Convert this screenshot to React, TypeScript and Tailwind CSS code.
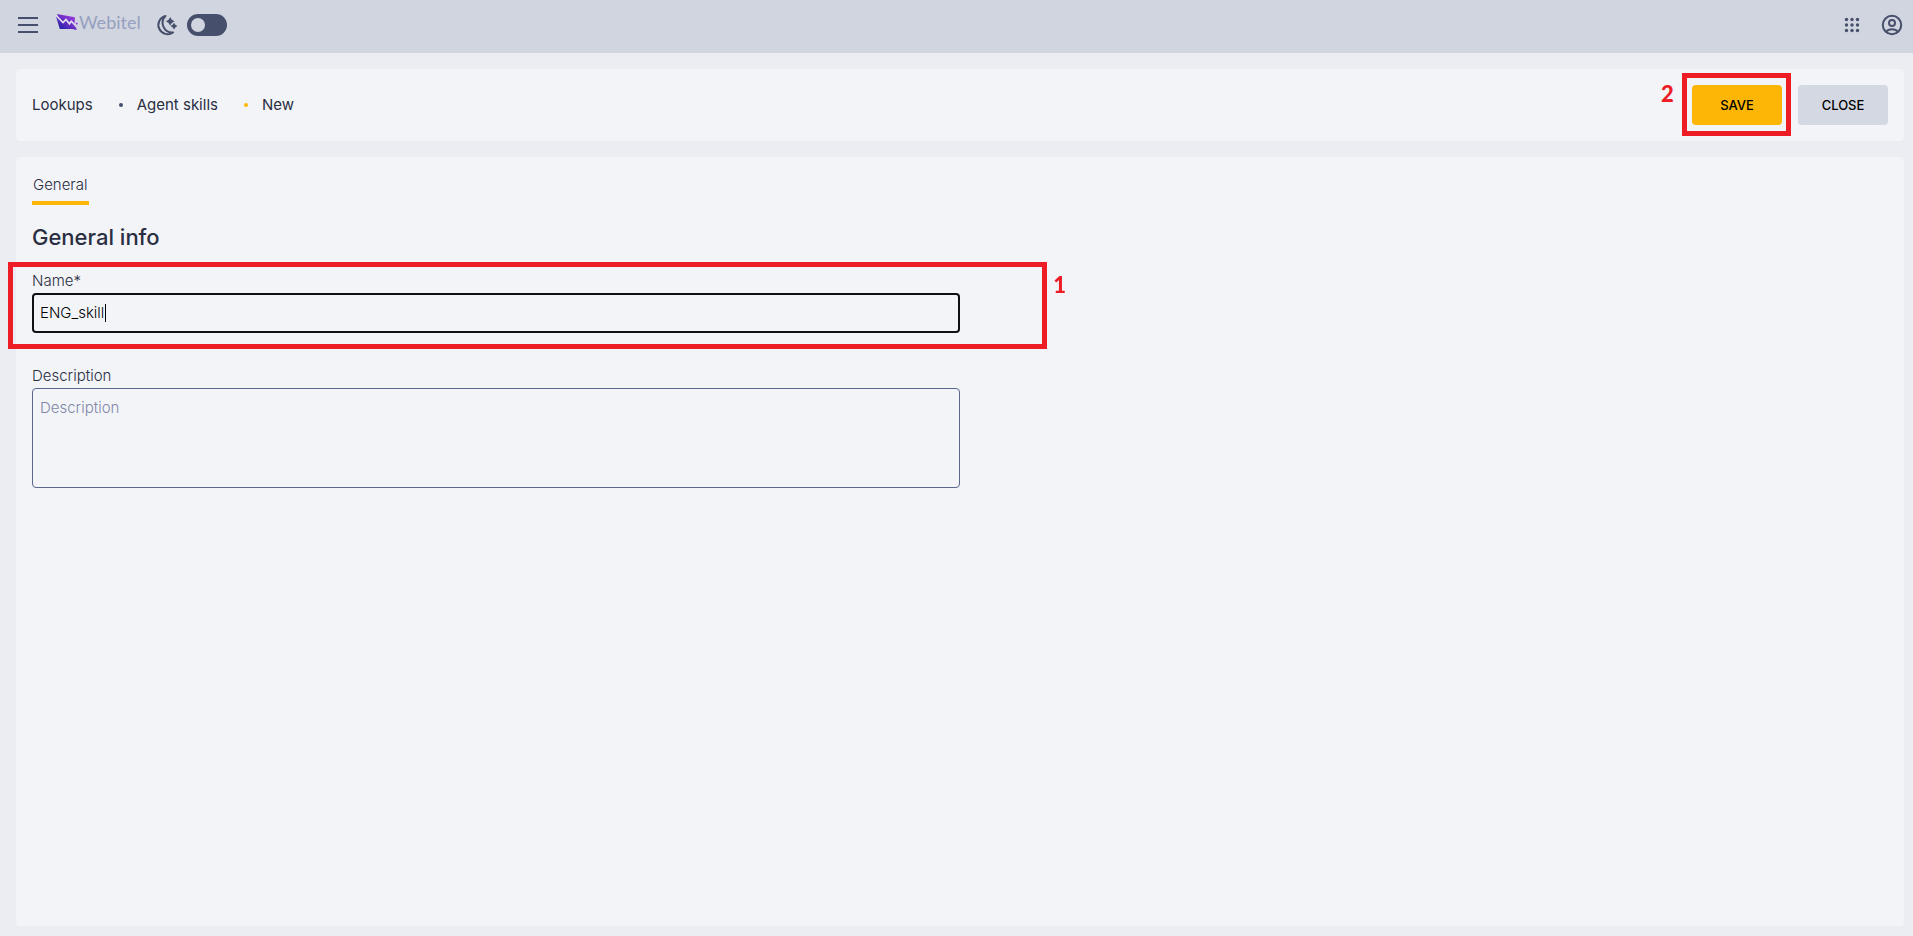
import { useState } from "react";
import type { ReactNode } from "react";

interface Crumb {
  label: string;
  dot: string;
}

const CRUMBS: Crumb[] = [
  { label: "Agent skills", dot: "bg-[#464f6b]" },
  { label: "New", dot: "bg-[#ffb608]" },
];

function MenuIcon() {
  return (
    <svg width="24" height="24" viewBox="0 0 24 24" fill="none" stroke="#464f6b" strokeWidth="2">
      <path d="M2 5h20M2 12h20M2 19h20" />
    </svg>
  );
}

function LogoMark() {
  return (
    <svg width="22" height="16" viewBox="0 0 22 16">
      <defs>
        <linearGradient id="mark" x1="0" y1="1" x2="1" y2="0">
          <stop offset="0.1" stopColor="#1f1fa8" />
          <stop offset="0.5" stopColor="#6a2fc4" />
          <stop offset="1" stopColor="#b03fe6" />
        </linearGradient>
      </defs>
      <path d="M1 0 L19 3.2 L18.6 9 L20.8 16 L16 15 L3.8 15 L0 2.6 L2 3 Z" fill="url(#mark)" />
      <path
        d="M0.4 1.8 L7 8.6 L10 5.4 L13.4 9.8 L15.2 7.2 L19.4 11.4"
        fill="none"
        stroke="#dfe0ee"
        strokeWidth="1.6"
      />
      <circle cx="20.8" cy="9.6" r="1.1" fill="#a63fe0" />
      <path d="M18 11.4 L22 11 L22 14 L20 13.6 Z" fill="#d1d5df" />
    </svg>
  );
}

function MoonIcon() {
  return (
    <svg width="24" height="24" viewBox="0 0 24 24" fill="none">
      <path
        d="M10.5 3 A9.2 9.2 0 1 0 18 19.4 A9.6 9.6 0 0 1 10.5 3 Z"
        stroke="#464f6b"
        strokeWidth="2"
        strokeLinejoin="round"
      />
      <g fill="#464f6b">
        <path d="M15.2 4 L16.8 6.7 L19.5 8.3 L16.8 9.9 L15.2 12.6 L13.6 9.9 L10.9 8.3 L13.6 6.7 Z" />
        <path d="M19 9.8 L20.3 11.8 L22.4 13.1 L20.3 14.4 L19 16.4 L17.7 14.4 L15.6 13.1 L17.7 11.8 Z" />
      </g>
    </svg>
  );
}

function AppsIcon() {
  return (
    <svg width="24" height="24" viewBox="0 0 24 24" fill="#464f6b">
      {[6.5, 12, 17.5].map((y) => [6.5, 12, 17.5].map((x) => <circle key={`${x}-${y}`} cx={x} cy={y} r="1.7" />))}
    </svg>
  );
}

function UserIcon() {
  return (
    <svg width="24" height="24" viewBox="0 0 24 24" fill="none" stroke="#464f6b" strokeWidth="2">
      <circle cx="12" cy="12" r="9.2" />
      <circle cx="12" cy="10" r="3" />
      <path d="M6.5 18.5 C8.5 15.4 15.5 15.4 17.5 18.5" />
    </svg>
  );
}

function Callout({ n, className, labelClassName }: { n: number; className: string; labelClassName: string }) {
  return (
    <div className={`pointer-events-none absolute border-5 border-[#ee1c25] ${className}`}>
      <span className={`absolute font-[Lato,sans-serif] text-[22px] leading-6 font-black text-[#ee1c25] ${labelClassName}`}>
        {n}
      </span>
    </div>
  );
}

function Card({ className, children }: { className: string; children: ReactNode }) {
  return <section className={`rounded bg-[#f3f4f8] px-4 ${className}`}>{children}</section>;
}

export default function App() {
  const [dark, setDark] = useState(false);
  const [name, setName] = useState("ENG_skill");
  const [description, setDescription] = useState("");

  return (
    <div className="flex min-h-screen flex-col bg-[#ecedf2] font-[Inter,sans-serif] text-[15px] leading-6 text-[#2a2e42]">
      <header className="flex h-[53px] items-center bg-[#d1d5df] pr-[9px] pb-1 pl-2">
        <button aria-label="Menu" className="mx-2">
          <MenuIcon />
        </button>
        <a href="#" className="ml-2 flex items-center gap-px pb-1.5 font-[Lato,sans-serif] text-lg leading-6 text-[#97a0bf]">
          <LogoMark />
          Webitel
        </a>
        <span className="ml-3.5">
          <MoonIcon />
        </span>
        <label className="ml-2 flex h-[22px] w-10 cursor-pointer items-center rounded-full bg-[#464f6b] px-1">
          <input
            type="checkbox"
            aria-label="Dark mode"
            checked={dark}
            onChange={(e) => setDark(e.target.checked)}
            className="size-3.5 appearance-none rounded-full bg-[#d1d5df] checked:ml-auto"
          />
        </label>
        <div className="ml-auto flex gap-4">
          <button aria-label="Applications">
            <AppsIcon />
          </button>
          <button aria-label="Account">
            <UserIcon />
          </button>
        </div>
      </header>

      <main className="flex flex-1 flex-col gap-4 pt-4 pr-[9px] pb-2.5 pl-4">
        <Card className="flex h-[72px] items-center justify-between">
          <nav className="flex items-center">
            <a href="#">Lookups</a>
            {CRUMBS.map((c) => (
              <a key={c.label} href="#" className="flex items-center">
                <span className={`mr-3.5 ml-6.5 size-1 rounded-full ${c.dot}`} />
                {c.label}
              </a>
            ))}
          </nav>
          <div className="flex gap-4 text-[13px] font-medium">
            <div className="relative">
              <button className="h-10 w-[90px] rounded bg-[#fdb605] text-black">SAVE</button>
              <Callout n={2} className="-top-3 -right-[9px] -bottom-[11px] -left-2.5" labelClassName="-left-[26px] top-1" />
            </div>
            <button className="h-10 w-[90px] rounded bg-[#d4d8e2] text-black">CLOSE</button>
          </div>
        </Card>

        <Card className="flex-1 pt-4">
          <div role="tablist" className="flex">
            <button role="tab" aria-selected="true" className="border-b-4 border-[#ffb608] px-px pb-1 font-light">
              General
            </button>
          </div>
          <form onSubmit={(e) => e.preventDefault()} className="w-1/2">
            <h1 className="mt-4 text-[22px] leading-8 font-medium">General info</h1>
            <div className="relative mt-4">
              <label htmlFor="name" className="block font-light">
                Name*
              </label>
              <input
                id="name"
                autoFocus
                value={name}
                onChange={(e) => setName(e.target.value)}
                className="block h-10 w-full rounded border-2 border-[#101014] px-1.5 pb-0.5 font-light text-black caret-transparent outline-none"
              />
              <span className="pointer-events-none absolute bottom-[11px] left-[73px] h-[18px] w-px bg-black" />
              <Callout n={1} className="-top-[7px] -right-[87px] -bottom-4 -left-6" labelClassName="-right-6 top-1.5" />
            </div>
            <label htmlFor="description" className="mt-[31px] block font-light">
              Description
            </label>
            <textarea
              id="description"
              placeholder="Description"
              value={description}
              onChange={(e) => setDescription(e.target.value)}
              className="block h-25 w-full resize-none rounded border border-[#5b678f] px-[7px] py-[7px] font-light outline-none placeholder:text-[#8088a6]"
            />
          </form>
        </Card>
      </main>
    </div>
  );
}
